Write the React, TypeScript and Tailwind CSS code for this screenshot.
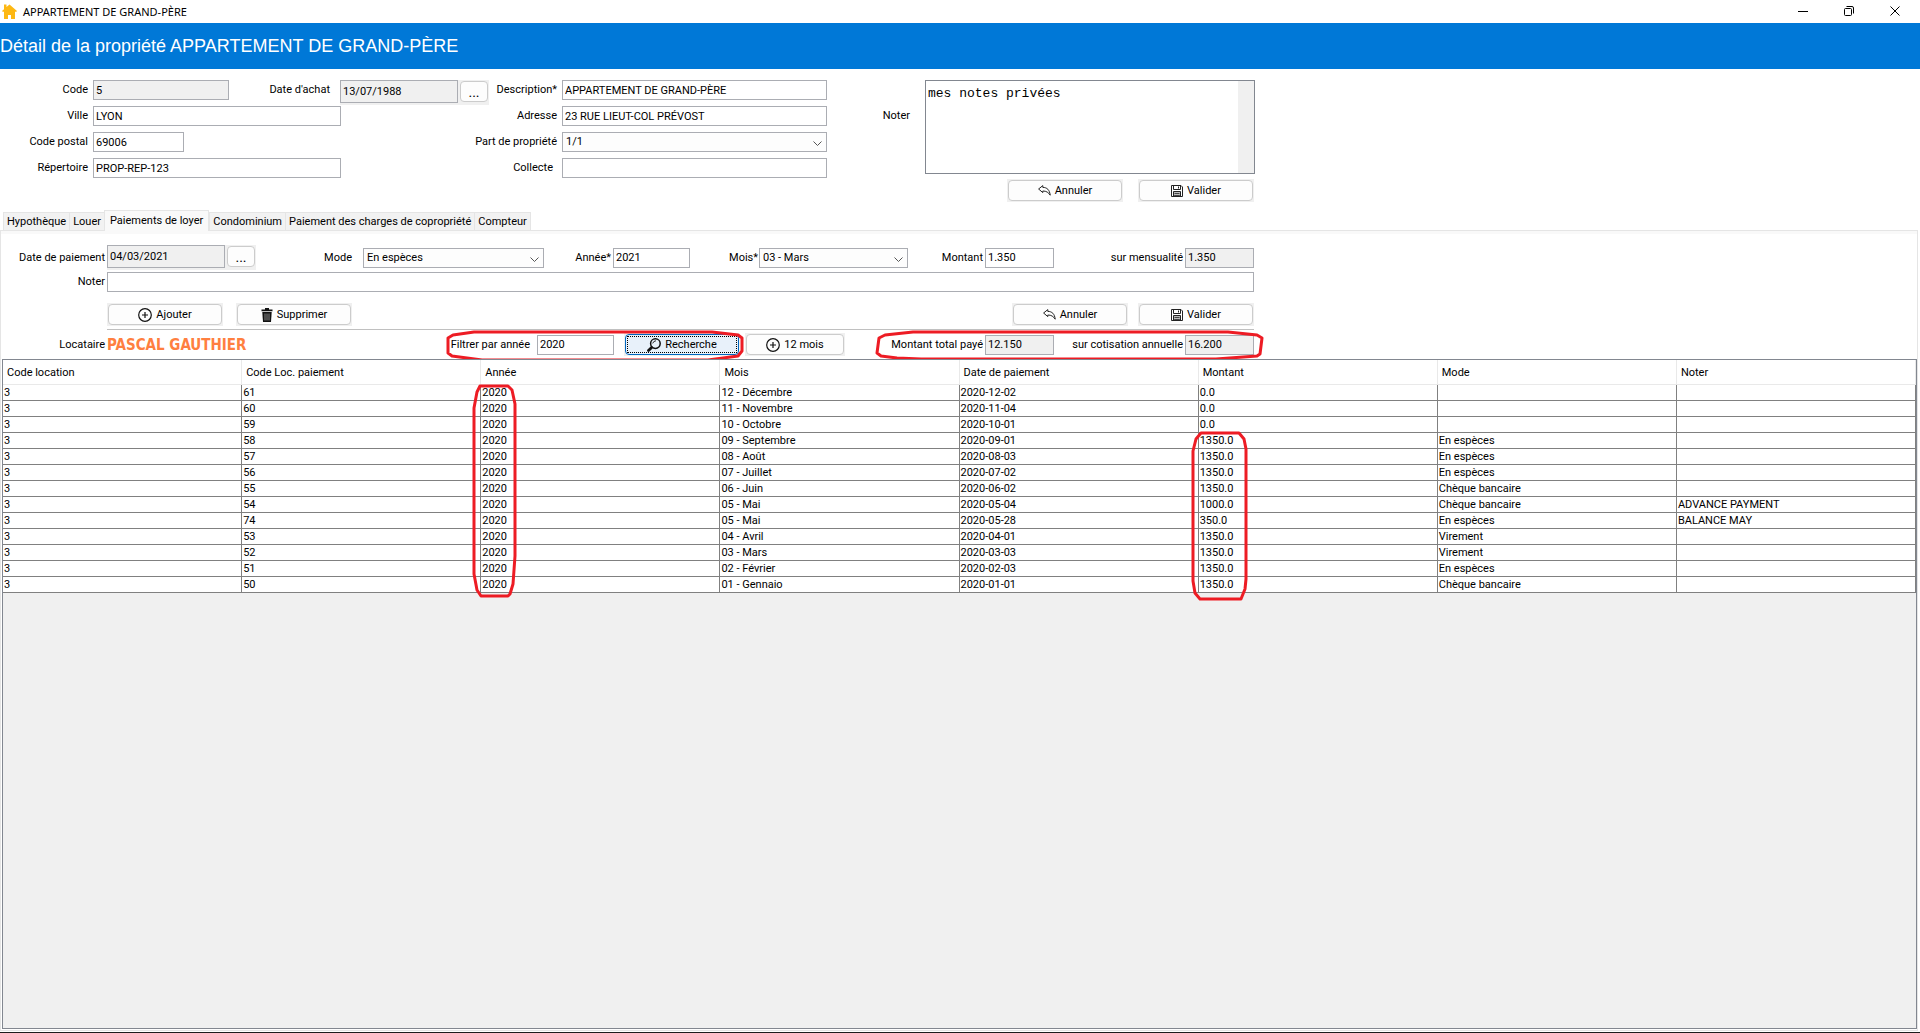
import type { ReactNode } from "react";
import clsx from "clsx";

const tabs = [
  "Hypothèque",
  "Louer",
  "Paiements de loyer",
  "Condominium",
  "Paiement des charges de copropriété",
  "Compteur",
];

const columns = [
  "Code location",
  "Code Loc. paiement",
  "Année",
  "Mois",
  "Date de paiement",
  "Montant",
  "Mode",
  "Noter",
];

const payments: string[][] = [
  ["3", "61", "2020", "12 - Décembre", "2020-12-02", "0.0", "", ""],
  ["3", "60", "2020", "11 - Novembre", "2020-11-04", "0.0", "", ""],
  ["3", "59", "2020", "10 - Octobre", "2020-10-01", "0.0", "", ""],
  ["3", "58", "2020", "09 - Septembre", "2020-09-01", "1350.0", "En espèces", ""],
  ["3", "57", "2020", "08 - Août", "2020-08-03", "1350.0", "En espèces", ""],
  ["3", "56", "2020", "07 - Juillet", "2020-07-02", "1350.0", "En espèces", ""],
  ["3", "55", "2020", "06 - Juin", "2020-06-02", "1350.0", "Chèque bancaire", ""],
  ["3", "54", "2020", "05 - Mai", "2020-05-04", "1000.0", "Chèque bancaire", "ADVANCE PAYMENT"],
  ["3", "74", "2020", "05 - Mai", "2020-05-28", "350.0", "En espèces", "BALANCE MAY"],
  ["3", "53", "2020", "04 - Avril", "2020-04-01", "1350.0", "Virement", ""],
  ["3", "52", "2020", "03 - Mars", "2020-03-03", "1350.0", "Virement", ""],
  ["3", "51", "2020", "02 - Février", "2020-02-03", "1350.0", "En espèces", ""],
  ["3", "50", "2020", "01 - Gennaio", "2020-01-01", "1350.0", "Chèque bancaire", ""],
];

export default function App() {
  return (
    <div className="flex h-screen flex-col overflow-hidden border-b border-[#1c1c1c] bg-white font-['Roboto','Liberation_Sans',sans-serif] text-[11px] leading-4 text-black">
      <TitleBar />
      <header className="flex h-[46px] shrink-0 items-center bg-[#0078d7]">
        <h1 className="font-['Liberation_Sans',Arial,sans-serif] text-[18px] leading-5 text-white">
          Détail de la propriété APPARTEMENT DE GRAND-PÈRE
        </h1>
      </header>
      <PropertyForm />
      <nav className="flex h-5 shrink-0 items-end pl-[3px]">
        {tabs.map((tab) => (
          <Tab key={tab} label={tab} active={tab === "Paiements de loyer"} />
        ))}
      </nav>
      <main className="mr-[2px] mb-px flex min-h-0 flex-1 flex-col border border-[#e5e5e5]">
        <div className="h-[3px] shrink-0 bg-[#f9f9f9]" />
        <PaymentForm />
        <PaymentTable />
      </main>
    </div>
  );
}

function TitleBar() {
  return (
    <div className="flex h-[23px] shrink-0 items-center justify-between pl-[2px]">
      <div className="flex items-center gap-[6px]">
        <HouseIcon />
        <span className="font-['Noto_Sans','Open_Sans',sans-serif] text-[11px]">
          APPARTEMENT DE GRAND-PÈRE
        </span>
      </div>
      <div className="flex h-full items-center pb-px">
        <WindowButton label="Réduire">
          <path d="M0 5.5H10" />
        </WindowButton>
        <WindowButton label="Restaurer">
          <rect x="0.5" y="2.5" width="7" height="7" rx="1" />
          <path d="M2.5 0.5H8Q9.5 0.5 9.5 2V7.5" />
        </WindowButton>
        <WindowButton label="Fermer">
          <path d="M0.5 0.5L9.5 9.5M9.5 0.5L0.5 9.5" />
        </WindowButton>
      </div>
    </div>
  );
}

function WindowButton({ label, children }: { label: string; children: ReactNode }) {
  return (
    <button aria-label={label} className="flex h-full w-[46px] items-center justify-center pr-1">
      <svg width="10" height="10" viewBox="0 0 10 10" fill="none" stroke="#000">
        {children}
      </svg>
    </button>
  );
}

function PropertyForm() {
  return (
    <form className="flex shrink-0 items-start pt-[11px] pb-2">
      <div className="grid grid-cols-[88px_248px_211px_265px] items-start gap-x-[5px] gap-y-[6px]">
        <Label id="code">Code</Label>
        <div className="col-span-2 flex h-5 items-start">
          <Field id="code" value="5" readOnly className="w-[136px]" />
          <Label id="achat" className="mr-[10px] w-[101px]">
            Date d'achat
          </Label>
          <DateField id="achat" value="13/07/1988" />
          <Label id="description" className="flex-1">
            Description*
          </Label>
        </div>
        <Field id="description" value="APPARTEMENT DE GRAND-PÈRE" />

        <Label id="ville">Ville</Label>
        <Field id="ville" value="LYON" />
        <Label id="adresse">Adresse</Label>
        <Field id="adresse" value="23 RUE LIEUT-COL PRÉVOST" />

        <Label id="postal">Code postal</Label>
        <Field id="postal" value="69006" className="w-[91px]" />
        <Label id="part">Part de propriété</Label>
        <Select id="part" options={["1/1", "1/2", "1/3"]} />

        <Label id="repertoire">Répertoire</Label>
        <Field id="repertoire" value="PROP-REP-123" />
        <Label id="collecte" className="pr-1">
          Collecte
        </Label>
        <Field id="collecte" value="" />
      </div>
      <div className="flex flex-col items-end gap-[5px]">
        <div className="flex items-start">
          <Label id="notes" className="mt-[26px] mr-[15px] w-[83px]">
            Noter
          </Label>
          <div className="flex h-[94px] w-[330px] border border-[#828790]">
            <textarea
              id="notes"
              defaultValue="mes notes privées"
              className="flex-1 resize-none px-[2px] pt-[5px] font-['Liberation_Mono','Courier_New',monospace] text-[13px] leading-4 outline-none"
            />
            <div className="w-4 bg-[#f0f0f0]" />
          </div>
        </div>
        <div className="flex gap-[15px] pr-px">
          <Button icon={<UndoIcon />}>Annuler</Button>
          <Button icon={<SaveIcon />}>Valider</Button>
        </div>
      </div>
    </form>
  );
}

function Tab({ label, active }: { label: string; active: boolean }) {
  return (
    <button
      className={clsx(
        "border border-b-0 border-[#e5e5e5] whitespace-nowrap",
        active
          ? "relative z-10 -mb-px h-[21px] bg-[#f9f9f9] px-[5px] pb-px"
          : "-mr-px h-[18px] bg-[#f2f2f2] px-[3px] pt-px"
      )}
    >
      {label}
    </button>
  );
}

function PaymentForm() {
  return (
    <form className="flex w-[1253px] shrink-0 flex-col pt-[11px]">
      <div className="flex items-center">
        <Label id="datePaiement" className="mr-[2px] w-[104px]">
          Date de paiement
        </Label>
        <DateField id="datePaiement" value="04/03/2021" />
        <Label id="mode" className="mr-[11px] w-24">
          Mode
        </Label>
        <Select id="mode" options={["En espèces", "Chèque bancaire", "Virement"]} className="w-[181px]" />
        <Label id="annee" className="mr-[2px] w-[67px]">
          Année*
        </Label>
        <Field id="annee" value="2021" className="w-[77px]" />
        <Label id="mois" className="mr-px w-[68px]">
          Mois*
        </Label>
        <Select id="mois" options={["03 - Mars", "04 - Avril", "05 - Mai"]} className="w-[149px]" />
        <Label id="montant" className="mr-[2px] w-[75px]">
          Montant
        </Label>
        <Field id="montant" value="1.350" className="w-[69px]" />
        <Label id="mensualite" className="mr-[2px] flex-1">
          sur mensualité
        </Label>
        <Field id="mensualite" value="1.350" readOnly className="w-[69px]" />
      </div>
      <div className="mt-[2px] flex items-center">
        <Label id="noter" className="mr-[2px] w-[104px]">
          Noter
        </Label>
        <Field id="noter" value="" className="flex-1" />
      </div>
      <div className="mt-[11px] ml-[106px] flex border-b border-[#c0c0c0] pb-[3px]">
        <Button icon={<PlusIcon />}>Ajouter</Button>
        <Button icon={<TrashIcon />} className="ml-[13px]">
          Supprimer
        </Button>
        <Button icon={<UndoIcon />} className="ml-auto">
          Annuler
        </Button>
        <Button icon={<SaveIcon />} className="ml-[10px]">
          Valider
        </Button>
      </div>
      <div className="flex h-[29px] items-center">
        <span className="mr-[2px] w-[104px] text-right">Locataire</span>
        <span className="font-['DejaVu_Sans_Condensed','DejaVu_Sans',sans-serif] text-[15px] font-bold text-[#ff7f40]">
          PASCAL GAUTHIER
        </span>
        <div className="relative ml-auto flex h-5 items-center">
          <Label id="filtre" className="mr-[7px]">
            Filtrer par année
          </Label>
          <Field id="filtre" value="2020" className="w-[77px]" />
          <Button icon={<SearchIcon />} focused className="ml-[10px]">
            Recherche
          </Button>
          <svg
            className="pointer-events-none absolute -top-[5px] -left-[5px]"
            width="300"
            height="32"
            viewBox="0 0 300 32"
            fill="none"
            stroke="#ed1c24"
            strokeWidth="3"
            strokeLinejoin="round"
          >
            <path d="M28 2H266L292 5L296 8V21L292 26L262 30H36L6 26L2 23V8L7 5Z" />
          </svg>
        </div>
        <Button icon={<PlusIcon />} className="ml-[5px] w-[100px]">
          12 mois
        </Button>
        <div className="relative ml-[45px] flex h-5 items-center">
          <Label id="total" className="mr-[2px] w-[93px]">
            Montant total payé
          </Label>
          <Field id="total" value="12.150" readOnly className="w-[69px]" />
          <Label id="annuelle" className="mr-[2px] w-[129px]">
            sur cotisation annuelle
          </Label>
          <Field id="annuelle" value="16.200" readOnly className="w-[69px]" />
          <svg
            className="pointer-events-none absolute -top-[5px] -left-[15px]"
            width="389"
            height="32"
            viewBox="0 0 389 32"
            fill="none"
            stroke="#ed1c24"
            strokeWidth="3"
            strokeLinejoin="round"
          >
            <path d="M38 2H353L382 5L387 8L385 24L382 26L341 29H46L22 28L6 26L2 23L4 8L10 5Z" />
          </svg>
        </div>
      </div>
    </form>
  );
}

function PaymentTable() {
  return (
    <div className="relative mb-px ml-px flex-1 border border-[#828790] bg-[#f0f0f0]">
      <table className="w-full table-fixed border-separate border-spacing-0 bg-white">
        <thead>
          <tr className="h-[25px]">
            {columns.map((column) => (
              <th
                key={column}
                className="border-r border-b border-[#e9e9e9] px-1 pt-[2px] pb-0 text-left font-normal"
              >
                {column}
              </th>
            ))}
          </tr>
        </thead>
        <tbody>
          {payments.map((row) => (
            <tr key={row[1]} className="h-4">
              {row.map((cell, i) => (
                <td key={i} className="border-r border-b border-[#808080] p-0 pl-px leading-[15px]">
                  {cell}
                </td>
              ))}
            </tr>
          ))}
        </tbody>
      </table>
      <svg
        className="pointer-events-none absolute top-6 left-[24.5%]"
        width="46"
        height="214"
        viewBox="0 0 46 214"
        fill="none"
        stroke="#ed1c24"
        strokeWidth="3"
        strokeLinejoin="round"
      >
        <path d="M8 2H36L40 6L43 20V172L41 200L38 210L36 212H9L5 206L2 190V24L5 8Z" />
      </svg>
      <svg
        className="pointer-events-none absolute top-[71px] left-[62.1%]"
        width="57"
        height="170"
        viewBox="0 0 57 170"
        fill="none"
        stroke="#ed1c24"
        strokeWidth="3"
        strokeLinejoin="round"
      >
        <path d="M10 2H48L53 8L55 18V148L54 158L50 168H9L4 162L2 150V20L5 8Z" />
      </svg>
    </div>
  );
}

function Label({ id, className, children }: { id: string; className?: string; children: ReactNode }) {
  return (
    <label htmlFor={id} className={clsx("text-right leading-5 whitespace-nowrap", className)}>
      {children}
    </label>
  );
}

type FieldProps = { id: string; value: string; readOnly?: boolean; className?: string };

function Field({ id, value, readOnly, className }: FieldProps) {
  return (
    <input
      id={id}
      type="text"
      defaultValue={value}
      readOnly={readOnly}
      className={clsx(
        "h-5 min-w-0 border border-[#abadb3] px-[2px] outline-none",
        readOnly ? "bg-[#f0f0f0]" : "bg-white",
        className
      )}
    />
  );
}

function DateField({ id, value }: { id: string; value: string }) {
  return (
    <div className="flex h-[25px] shrink-0 items-start gap-[2px] bg-[#f0f0f0] pr-px">
      <input
        id={id}
        type="text"
        defaultValue={value}
        readOnly
        className="h-[23px] w-[118px] border border-[#abadb3] bg-[#f0f0f0] px-[2px] outline-none"
      />
      <button
        type="button"
        aria-label="Choisir la date"
        className="mt-px h-[21px] w-7 rounded-[4px] border border-[#cccccc] bg-[#fdfdfd] text-[14px] leading-4"
      >
        ...
      </button>
    </div>
  );
}

function Select({ id, options, className }: { id: string; options: string[]; className?: string }) {
  return (
    <div className={clsx("relative h-5", className)}>
      <select
        id={id}
        className="block h-5 w-full appearance-none border border-[#abadb3] bg-[#fdfdfd] px-[3px] leading-4 outline-none"
      >
        {options.map((option) => (
          <option key={option}>{option}</option>
        ))}
      </select>
      <svg
        className="pointer-events-none absolute top-[9px] right-[5px]"
        width="9"
        height="6"
        viewBox="0 0 9 6"
        fill="none"
        stroke="#555"
      >
        <path d="M0.5 0.5L4.5 4.5L8.5 0.5" />
      </svg>
    </div>
  );
}

type ButtonProps = { icon: ReactNode; focused?: boolean; className?: string; children: ReactNode };

function Button({ icon, focused, className, children }: ButtonProps) {
  return (
    <span
      className={clsx(
        "flex h-[23px] shrink-0 bg-[#f0f0f0] p-px",
        !className?.includes("w-") && "w-[116px]",
        className
      )}
    >
      <button
        type="button"
        className={clsx(
          "flex w-full rounded-[4px] border p-px",
          focused ? "border-[#0067c0] bg-[#e8f1fa]" : "border-[#cccccc] bg-[#fdfdfd]"
        )}
      >
        <span
          className={clsx(
            "flex h-full w-full items-center justify-center gap-1",
            focused && "border border-dotted border-black"
          )}
        >
          {icon}
          {children}
        </span>
      </button>
    </span>
  );
}

function HouseIcon() {
  return (
    <svg width="15" height="15" viewBox="0 0 15 15" fill="#fdb813">
      <path d="M2 0.5H4.5V3L7.5 0.5L15 7L14 8L13 7.4V15H9V11H6V15H2V7.4L1 8L0 7L2 5.2Z" />
    </svg>
  );
}

function UndoIcon() {
  return (
    <svg width="13" height="11" viewBox="0 0 13 11" fill="#fff" stroke="#222" strokeLinejoin="round">
      <path d="M0.6 4L4.8 0.6V2.4C9 2.4 11.6 4.8 12.2 10.2C10.4 7.4 8.4 6 4.8 6V7.6Z" />
    </svg>
  );
}

function SaveIcon() {
  return (
    <svg width="12" height="12" viewBox="0 0 12 12" fill="none" stroke="#222">
      <path d="M0.5 0.5H10L11.5 2V11.5H0.5Z" fill="#fff" />
      <path d="M2.5 0.5V4.5H9.5V0.5" />
      <path d="M7.5 1.5V3.5" />
      <path d="M2.5 11V6.5H9.5V11Z" fill="#bbb" />
      <path d="M3.5 8.5H8.5M3.5 10.5H8.5" stroke="#444" />
    </svg>
  );
}

function PlusIcon() {
  return (
    <svg width="14" height="14" viewBox="0 0 14 14" fill="none" stroke="#111">
      <circle cx="7" cy="7" r="6.3" strokeWidth="1.2" />
      <path d="M7 4V10M4 7H10" strokeWidth="1.2" />
    </svg>
  );
}

function TrashIcon() {
  return (
    <svg width="12" height="14" viewBox="0 0 12 14" fill="#111">
      <path d="M4 0H8V1.5H11.5V3.3H0.5V1.5H4Z" />
      <path d="M1.3 4H10.7L10 14H2Z" />
      <path d="M4 5.5V12.5M6 5.5V12.5M8 5.5V12.5" stroke="#aaa" strokeWidth="0.8" />
    </svg>
  );
}

function SearchIcon() {
  return (
    <svg width="14" height="14" viewBox="0 0 14 14" fill="none" stroke="#111" strokeLinecap="round">
      <circle cx="8.4" cy="5.6" r="4.8" strokeWidth="1.5" />
      <path d="M5.8 5Q6.4 3 8.6 2.8" strokeWidth="0.9" />
      <path d="M4.6 9.4L1.5 12.5" strokeWidth="2.8" />
    </svg>
  );
}
